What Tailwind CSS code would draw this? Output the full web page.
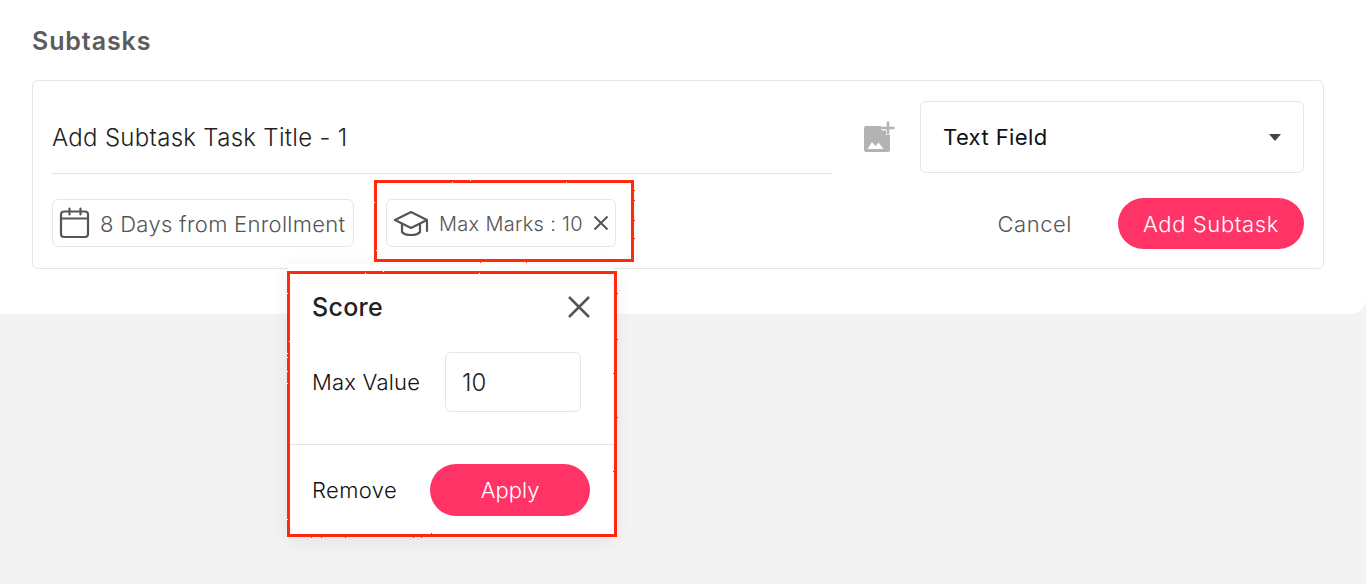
<!DOCTYPE html>
<html lang="en">
<head>
  <meta charset="UTF-8" />
  <title>Subtasks</title>
  <script src="https://cdn.jsdelivr.net/npm/@tailwindcss/browser@4"></script>
</head>
<body class="relative h-[584px] w-[1366px] overflow-hidden bg-[#f3f3f3] font-['Inter',sans-serif]">

  <!-- Panel -->
  <section class="h-[314px] rounded-br-[16px] bg-white pt-[26px] pr-[42px] pl-[32px]">
    <h2 class="h-[30px] text-[25px] leading-[30px] font-semibold tracking-[0.9px] text-[#5c5c5c]">Subtasks</h2>

    <div class="mt-[24px] h-[189px] rounded-[6px] border border-[#e6e6e6] pt-[20px] pr-[19px] pl-[19px]">
      <!-- Title row -->
      <div class="flex h-[72px] items-start">
        <div class="h-[73px] w-[780px] border-b border-[#e2e2e2] text-[24px] leading-[74px] font-light tracking-[0.3px] text-[#222]">Add Subtask Task Title - 1</div>
        <svg class="mt-[20px] ml-[32px] h-[32px] w-[32px]" viewBox="0 0 32 32" fill="#b3b3b3">
          <path d="M0 7a2 2 0 0 1 2-2h15.500v4.500H22V14h4v15a2 2 0 0 1-2 2H2a2 2 0 0 1-2-2z"/>
          <path d="M3.500 28l4.500-7 3.500 4 3-3.500L19.500 28q.5 0 -1 0z" fill="#fff"/>
          <path d="M22.700 .5h2.600v5.200h5.200v2.600h-5.200v5.200h-2.600V8.300h-5.200V5.700h5.200z"/>
        </svg>
        <div class="ml-[24px] flex h-[72px] w-[384px] items-center justify-between rounded-[6px] border border-[#e6e6e6] pr-[22px] pl-[22px]">
          <span class="text-[22px] tracking-[0.4px] text-[#111]">Text Field</span>
          <svg class="h-[7px] w-[12px]" viewBox="0 0 12 7" fill="#444"><path d="M0 0h12L6 7z"/></svg>
        </div>
      </div>

      <!-- Chips and actions -->
      <div class="mt-[25px] flex items-center">
        <div class="mb-[1px] flex h-[48px] w-[302px] items-center rounded-[6px] border border-[#e6e6e6] pl-[6px]">
          <svg class="h-[32px] w-[32px]" viewBox="0 0 32 32" fill="none" stroke="#555" stroke-width="2.200" stroke-linecap="round">
            <rect x="2" y="4.500" width="27" height="25.500" rx="3"/>
            <path d="M2 11.500h27M10.500 1.500v6M21.500 1.500v6"/>
          </svg>
          <span class="ml-[9px] pt-[3px] text-[22px] font-light tracking-[0.3px] whitespace-nowrap text-[#555]">8 Days from Enrollment</span>
        </div>
        <div class="mb-[1px] ml-[32px] flex h-[48px] w-[230px] items-center rounded-[6px] border border-[#e6e6e6] pl-[6px]">
          <svg class="h-[28px] w-[36px]" viewBox="0 0 36 28" fill="none" stroke="#555" stroke-width="2.200" stroke-linejoin="round" stroke-linecap="round">
            <path d="M18 3 2 11l16 8 16-8z"/>
            <path d="M9 15v8c3 4 15 4 18 0v-8"/>
            <path d="M34 12v10"/>
          </svg>
          <span class="ml-[10px] pt-[1px] text-[20px] font-light tracking-[0.3px] whitespace-nowrap text-[#555]">Max Marks : 10</span>
          <svg class="ml-[10px] h-[16px] w-[16px]" viewBox="0 0 16 16" stroke="#555" stroke-width="2"><path d="M1.500 1.500l13 13M14.500 1.500l-13 13"/></svg>
        </div>
        <span class="ml-auto pt-[2px] text-[22px] font-light tracking-[0.55px] text-[#555]">Cancel</span>
        <button class="ml-[46px] h-[51px] w-[186px] rounded-full bg-[#ff3366] pt-[2px] text-[22px] font-light tracking-[0.6px] text-white">Add Subtask</button>
      </div>
    </div>
  </section>

  <!-- Score popover -->
  <div class="absolute top-[264px] left-[288px] h-[272px] w-[326px] bg-white pt-[8px] shadow-[0_4px_20px_rgba(0,0,0,0.08)]">
    <div class="flex h-[70px] items-center justify-between pr-[23px] pl-[24px]">
      <span class="pt-[2px] text-[25px] font-medium tracking-[0.3px] text-[#222]">Score</span>
      <svg class="h-[24px] w-[24px]" viewBox="0 0 24 24" stroke="#555" stroke-width="2.500"><path d="M2 2l20 20M22 2 2 22"/></svg>
    </div>
    <div class="mt-[10px] flex items-center pl-[24px]">
      <span class="w-[133px] text-[22px] font-light tracking-[0.2px] text-[#111]">Max Value</span>
      <div class="flex h-[60px] w-[136px] items-center rounded-[6px] border border-[#e6e6e6] pt-[2px] pl-[16px] text-[24px] font-light text-[#222]">10</div>
    </div>
    <div class="mt-[32px] flex h-[92px] items-center border-t border-[#e4e4e4] pr-[24px] pb-[2px] pl-[24px]">
      <span class="pt-[2px] text-[22px] font-light tracking-[0.4px] text-[#111]">Remove</span>
      <button class="ml-auto h-[52px] w-[160px] rounded-full bg-[#ff3366] pt-[2px] text-[22px] font-light text-white">Apply</button>
    </div>
  </div>

  <!-- Red annotation boxes, hand drawn look -->
  <svg class="absolute h-0 w-0"><filter id="rough"><feTurbulence type="fractalNoise" baseFrequency="0.5" numOctaves="2" /><feDisplacementMap in="SourceGraphic" scale="2" /></filter></svg>
  <div class="absolute top-[180px] left-[374px] h-[82px] w-[260px] border-[3px] border-[#ff2a0c] [filter:url(#rough)]"></div>
  <div class="absolute top-[271px] left-[287px] h-[266px] w-[330px] border-[3px] border-[#ff2a0c] [filter:url(#rough)]"></div>

</body>
</html>
